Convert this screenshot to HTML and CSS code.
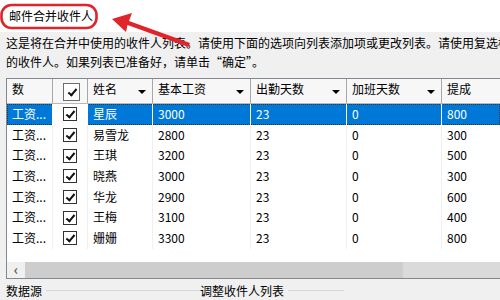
FILE: index.html
```html
<!DOCTYPE html>
<html lang="zh-CN">
<head>
  <meta charset="UTF-8" />
  <title>邮件合并收件人</title>
  <link rel="stylesheet" href="styles.css">
</head>
<body>

<div class="dialog">
  <div class="titlebar">
    <span class="title">邮件合并收件人</span>
  </div>

  <div class="desc">
    <p>这是将在合并中使用的收件人列表。请使用下面的选项向列表添加项或更改列表。请使用复选框</p>
    <p>的收件人。如果列表已准备好，请单击“确定”。</p>
  </div>

  <div class="list">
    <div class="row head">
      <div class="cell">数</div>
      <div class="cell check"><span class="box big"></span></div>
      <div class="cell">姓名<i class="arrow"></i></div>
      <div class="cell">基本工资<i class="arrow"></i></div>
      <div class="cell">出勤天数<i class="arrow"></i></div>
      <div class="cell">加班天数<i class="arrow"></i></div>
      <div class="cell">提成<i class="arrow"></i></div>
    </div>

    <div class="row sel">
      <div class="cell">工资...</div>
      <div class="cell check"><span class="box"></span></div>
      <div class="cell">星辰</div><div class="cell">3000</div><div class="cell">23</div><div class="cell">0</div><div class="cell">800</div>
    </div>
    <div class="row">
      <div class="cell">工资...</div>
      <div class="cell check"><span class="box"></span></div>
      <div class="cell">易雪龙</div><div class="cell">2800</div><div class="cell">23</div><div class="cell">0</div><div class="cell">300</div>
    </div>
    <div class="row">
      <div class="cell">工资...</div>
      <div class="cell check"><span class="box"></span></div>
      <div class="cell">王琪</div><div class="cell">3200</div><div class="cell">23</div><div class="cell">0</div><div class="cell">500</div>
    </div>
    <div class="row">
      <div class="cell">工资...</div>
      <div class="cell check"><span class="box"></span></div>
      <div class="cell">晓燕</div><div class="cell">3000</div><div class="cell">23</div><div class="cell">0</div><div class="cell">300</div>
    </div>
    <div class="row">
      <div class="cell">工资...</div>
      <div class="cell check"><span class="box"></span></div>
      <div class="cell">华龙</div><div class="cell">2900</div><div class="cell">23</div><div class="cell">0</div><div class="cell">600</div>
    </div>
    <div class="row">
      <div class="cell">工资...</div>
      <div class="cell check"><span class="box"></span></div>
      <div class="cell">王梅</div><div class="cell">3100</div><div class="cell">23</div><div class="cell">0</div><div class="cell">400</div>
    </div>
    <div class="row">
      <div class="cell">工资...</div>
      <div class="cell check"><span class="box"></span></div>
      <div class="cell">姗姗</div><div class="cell">3300</div><div class="cell">23</div><div class="cell">0</div><div class="cell">800</div>
    </div>

    <div class="filler"></div>

    <div class="hscroll">
      <span class="scroll-btn">&lsaquo;</span>
      <span class="thumb"></span>
      <span class="thumb light"></span>
    </div>
  </div>

  <div class="groups">
    <div class="group first"><span>数据源</span><i class="rule"></i></div>
    <div class="group"><span>调整收件人列表</span><i class="rule short"></i></div>
  </div>
</div>

<!-- red annotation laid over the dialog -->
<svg class="callout" width="220" height="60" viewBox="0 0 220 60">
  <rect x="1.5" y="5" width="95" height="23" rx="10" fill="none" stroke="#e0242b" stroke-width="2.6"/>
  <path d="M112 19 L132 13 L129 21 L190 43 L188.5 47 L127.5 25 L126 32 Z" fill="#e0242b"/>
</svg>

</body>
</html>
```

FILE: styles.css
```css
* {
  box-sizing: border-box;
}

body {
  position: relative;
  margin: 0;
  width: 500px;
  height: 300px;
  overflow: hidden;
  background: #f0f0f0;
  font-family: "Noto Sans CJK SC", "Microsoft YaHei", sans-serif;
  font-size: 12px;
  color: #000;
}

.titlebar {
  height: 32px;
  background: #fff;
  padding: 7px 0 0 9px;
  line-height: 18px;
}

.callout {
  position: absolute;
  left: 0;
  top: 0;
  z-index: 5;
}

.desc {
  padding: 1px 0 0 6px;
  height: 46px;
  white-space: nowrap;
}

.desc p {
  margin: 0;
  line-height: 19px;
}

.list {
  margin-left: 6px;
  width: 494px;
  border: 1px solid #828790;
  border-right: none;
  background: #fff;
  overflow: hidden;
}

.row {
  display: grid;
  grid-template-columns: 46px 35px 65px 98px 96px 95px 110px;
  height: 20.7px;
  line-height: 20px;
  white-space: nowrap;
}

.cell {
  position: relative;
  padding-left: 5px;
  border-right: 1px solid #f0f0f0;
  overflow: hidden;
}

.head {
  height: 25px;
  line-height: 17px;
  background: #f7f7f7;
  border-bottom: 1px solid #b8b8b8;
}

.head .cell {
  border-right: 1px solid #a8a8a8;
  padding-top: 1px;
}

.arrow {
  position: absolute;
  right: 6px;
  top: 11px;
  width: 0;
  height: 0;
  border-left: 4px solid transparent;
  border-right: 4px solid transparent;
  border-top: 4px solid #000;
}

.check {
  display: flex;
  align-items: center;
  padding-left: 10px;
}

.box {
  position: relative;
  width: 14px;
  height: 14px;
  border: 1px solid #333;
  background: #fff;
}

.box::after {
  content: "";
  position: absolute;
  left: 4px;
  top: 1px;
  width: 3px;
  height: 7px;
  border: solid #111;
  border-width: 0 2px 2px 0;
  transform: rotate(40deg);
}

.box.big {
  width: 17px;
  height: 18px;
  border-color: #6e6e6e;
}

.box.big::after {
  left: 6px;
  top: 3px;
}

.sel {
  background: #0078d7;
  color: #fff;
  outline: 1px dotted #333;
  outline-offset: -1px;
}

.sel .cell {
  border-right-color: #fff;
}

.sel .check {
  background: #fff;
}

.filler {
  height: 13px;
}

.hscroll {
  display: flex;
  height: 16px;
  background: #f0f0f0;
}

.scroll-btn {
  width: 18px;
  line-height: 15px;
  font-size: 14px;
  font-weight: bold;
  color: #606060;
  text-align: center;
}

.thumb {
  flex: 1;
  background: #cdcdcd;
}

.thumb.light {
  flex: none;
  width: 97px;
  background: #dadada;
}

.groups {
  display: flex;
  padding: 3px 0 0 6px;
  line-height: 18px;
}

.group {
  display: flex;
  align-items: center;
}

.group.first {
  width: 194px;
}

.rule {
  flex: 1;
  height: 1px;
  margin-left: 4px;
  background: #d8d8d8;
}

.rule.short {
  width: 56px;
  flex: none;
}
```
